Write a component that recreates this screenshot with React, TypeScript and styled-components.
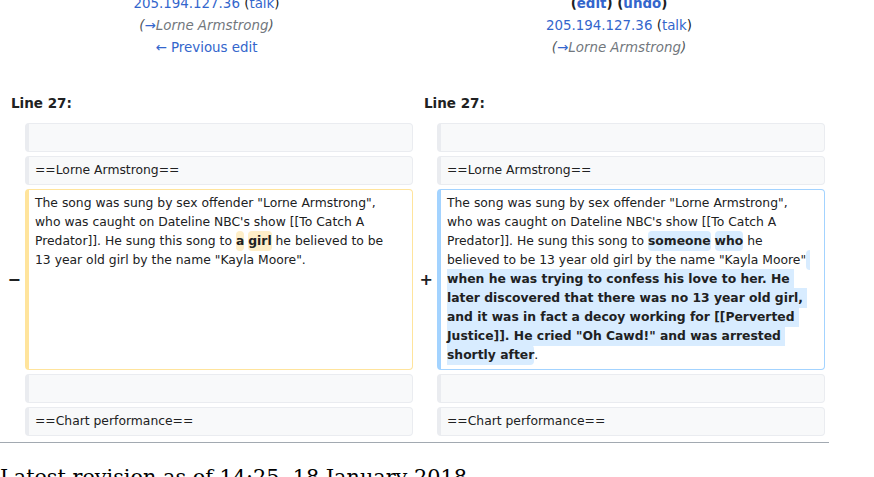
import React from "react";
import styled, { createGlobalStyle } from "styled-components";

const Global = createGlobalStyle`
  html, body { margin: 0; padding: 0; background: #fff; }
  body { font-family: "DejaVu Sans", sans-serif; color: #202122; overflow: hidden; }
`;

const Page = styled.div`
  width: 829px;
`;

const Header = styled.div`
  display: grid;
  grid-template-columns: 413px 412px;
  margin-top: -7px;
  font-size: 13.4px;
  line-height: 22px;
  text-align: center;
`;

const HeaderCol = styled.div`
  display: flex;
  flex-direction: column;
`;

const Line = styled.div<{ $bold?: boolean }>`
  font-weight: ${(p) => (p.$bold ? 700 : 400)};
  color: #202122;
`;

const A = styled.span`
  color: #3366cc;
`;

const Comment = styled.span`
  font-style: italic;
  color: #54595d;
`;

const CommentText = styled.span`
  color: #72777d;
`;

const Grid = styled.div`
  display: grid;
  grid-template-columns: 25px 388px 24px 388px;
  row-gap: 4px;
`;

const LineNo = styled.div`
  grid-column: span 2;
  font-weight: 700;
  font-size: 13.5px;
  line-height: 20px;
  padding-left: 11px;
  margin-top: 34px;
  margin-bottom: 6px;
`;

const Marker = styled.div`
  align-self: center;
  text-align: right;
  padding-right: 4px;
  font-weight: 700;
  font-size: 16px;
  color: #202122;
`;

const Cell = styled.div<{ $kind: "context" | "del" | "add" }>`
  box-sizing: border-box;
  font-size: 12.35px;
  line-height: 19px;
  padding: 4px 10px 4px 6px;
  min-height: 29px;
  border: 1px solid
    ${(p) => (p.$kind === "del" ? "#ffe49c" : p.$kind === "add" ? "#a3d3ff" : "#eaecf0")};
  border-left-width: 4px;
  border-radius: 4px;
  background: ${(p) => (p.$kind === "context" ? "#f8f9fa" : "#ffffff")};
  color: #202122;
  word-wrap: break-word;
  white-space: pre-wrap;
`;

const Change = styled.span<{ $kind: "del" | "add" }>`
  font-weight: 700;
  border-radius: 4px;
  padding: 0.25em 0;
  background: ${(p) => (p.$kind === "del" ? "#feeec8" : "#d8ecff")};
`;

const Rule = styled.hr`
  margin: 6px 0 0;
  border: 0;
  height: 1px;
  background: #a2a9b1;
  width: 829px;
`;

const Title = styled.h2`
  margin: 20px 0 0;
  font-family: "DejaVu Serif", serif;
  font-weight: 400;
  font-size: 20.8px;
  line-height: 28px;
  color: #000;
  white-space: nowrap;
`;

function Talk() {
  return (
    <Line>
      <A>205.194.127.36</A> (<A>talk</A>)
    </Line>
  );
}

function EditComment() {
  return (
    <Line>
      <Comment>
        (<A>→</A>
        <CommentText>Lorne Armstrong</CommentText>)
      </Comment>
    </Line>
  );
}

export default function App() {
  return (
    <>
      <Global />
      <Page>
        <Header>
          <HeaderCol>
            <Talk />
            <EditComment />
            <Line>
              <A>← Previous edit</A>
            </Line>
          </HeaderCol>
          <HeaderCol>
            <Line $bold>
              (<A>edit</A>) (<A>undo</A>)
            </Line>
            <Talk />
            <EditComment />
          </HeaderCol>
        </Header>
        <Grid>
          <LineNo>Line 27:</LineNo>
          <LineNo>Line 27:</LineNo>

          <Marker />
          <Cell $kind="context"></Cell>
          <Marker />
          <Cell $kind="context"></Cell>

          <Marker />
          <Cell $kind="context">==Lorne Armstrong==</Cell>
          <Marker />
          <Cell $kind="context">==Lorne Armstrong==</Cell>

          <Marker>−</Marker>
          <Cell $kind="del">
            The song was sung by sex offender "Lorne Armstrong", who was caught on Dateline NBC's show [[To Catch A Predator]]. He sung this song to{" "}
            <Change $kind="del">a</Change> <Change $kind="del">girl</Change> he believed to be 13 year old girl by the name "Kayla Moore".
          </Cell>
          <Marker>+</Marker>
          <Cell $kind="add">
            The song was sung by sex offender "Lorne Armstrong", who was caught on Dateline NBC's show [[To Catch A Predator]]. He sung this song to{" "}
            <Change $kind="add">someone</Change> <Change $kind="add">who</Change> he believed to be 13 year old girl by the name "Kayla Moore"
            <Change $kind="add">
              {" "}when he was trying to confess his love to her. He later discovered that there was no 13 year old girl, and it was in fact a decoy working for [[Perverted Justice]]. He cried "Oh Cawd!" and was arrested shortly after
            </Change>
            .
          </Cell>

          <Marker />
          <Cell $kind="context"></Cell>
          <Marker />
          <Cell $kind="context"></Cell>

          <Marker />
          <Cell $kind="context">==Chart performance==</Cell>
          <Marker />
          <Cell $kind="context">==Chart performance==</Cell>
        </Grid>
        <Rule />
        <Title>Latest revision as of 14:25, 18 January 2018</Title>
      </Page>
    </>
  );
}
